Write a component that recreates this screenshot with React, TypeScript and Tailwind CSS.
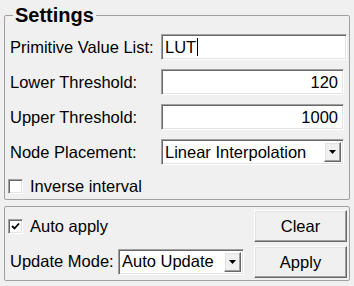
import React from 'react';

const font = { fontFamily: '"Liberation Sans", Arial, sans-serif' };

const sunken =
  'border border-t-[#a0a0a0] border-l-[#a0a0a0] border-b-white border-r-white shadow-[inset_1px_1px_0_#696969,inset_-1px_-1px_0_#e3e3e3] bg-white';
const raised =
  'border border-t-white border-l-white border-b-[#696969] border-r-[#696969] shadow-[inset_-1px_-1px_0_#a0a0a0,inset_1px_1px_0_#e3e3e3] bg-[#f0f0f0]';

const Check: React.FC<{ checked?: boolean }> = ({ checked }) => (
  <span className={`w-[15px] h-[15px] shrink-0 flex items-center justify-center ${sunken}`}>
    {checked && (
      <svg width="9" height="9" viewBox="0 0 9 9">
        <path d="M1 4 L3.5 6.5 L8 1.5" stroke="#000" strokeWidth="1.8" fill="none" />
      </svg>
    )}
  </span>
);

const Combo: React.FC<{ value: string; className: string }> = ({ value, className }) => (
  <div className={`flex items-center pl-[3px] pr-[2px] ${sunken} ${className}`}>
    <span className="flex-1 truncate">{value}</span>
    <span className={`w-[17px] h-[20px] flex items-center justify-center ${raised}`}>
      <svg width="7" height="4" viewBox="0 0 7 4">
        <path d="M0 0 H7 L3.5 4 Z" fill="#000" />
      </svg>
    </span>
  </div>
);

export default function App() {
  return (
    <div className="w-[354px] h-[286px] bg-[#f0f0f0] text-black text-[16.5px] px-1 pt-[4px]" style={font}>
      <fieldset className="border border-[#a0a0a0] rounded-[2px] pl-[5px] pr-[5px] pb-[6px] h-[196px]">
        <legend className="px-[2px] ml-[3px] text-[20px] font-bold leading-[22px]">Settings</legend>
        <div className="flex flex-col gap-[9px] mt-[8px]">
          <div className="flex items-center h-[26px]">
            <span className="w-[151px] shrink-0">Primitive Value List:</span>
            <div className={`h-[26px] flex-1 -mr-[3px] flex items-center pl-[3px] ${sunken}`}>
              LUT<span className="w-px h-[18px] bg-black ml-px" />
            </div>
          </div>
          <div className="flex items-center h-[26px]">
            <span className="w-[151px] shrink-0">Lower Threshold:</span>
            <div className={`h-[26px] flex-1 flex items-center justify-end pr-[5px] ${sunken}`}>120</div>
          </div>
          <div className="flex items-center h-[26px]">
            <span className="w-[151px] shrink-0">Upper Threshold:</span>
            <div className={`h-[26px] flex-1 flex items-center justify-end pr-[5px] ${sunken}`}>1000</div>
          </div>
          <div className="flex items-center h-[26px]">
            <span className="w-[151px] shrink-0">Node Placement:</span>
            <Combo value="Linear Interpolation" className="h-[26px] flex-1" />
          </div>
          <label className="flex items-center gap-[7px] -ml-[2px]">
            <Check />
            <span>Inverse interval</span>
          </label>
        </div>
      </fieldset>
      <div className="mt-[6px] border border-[#a0a0a0] rounded-[2px] h-[75px] flex pl-[5px] pr-[2px] pt-[3px]">
        <div className="flex-1 flex flex-col">
          <label className="flex items-center gap-[7px] -ml-[2px] mt-[4px]">
            <Check checked />
            <span>Auto apply</span>
          </label>
          <div className="flex items-center mt-[10px]">
            <span className="w-[108px] shrink-0">Update Mode:</span>
            <Combo value="Auto Update" className="h-[26px] w-[126px]" />
          </div>
        </div>
        <div className="w-[93px] flex flex-col gap-[4px]">
          <button className={`h-[32px] ${raised}`}>Clear</button>
          <button className={`h-[32px] ${raised}`}>Apply</button>
        </div>
      </div>
    </div>
  );
}
